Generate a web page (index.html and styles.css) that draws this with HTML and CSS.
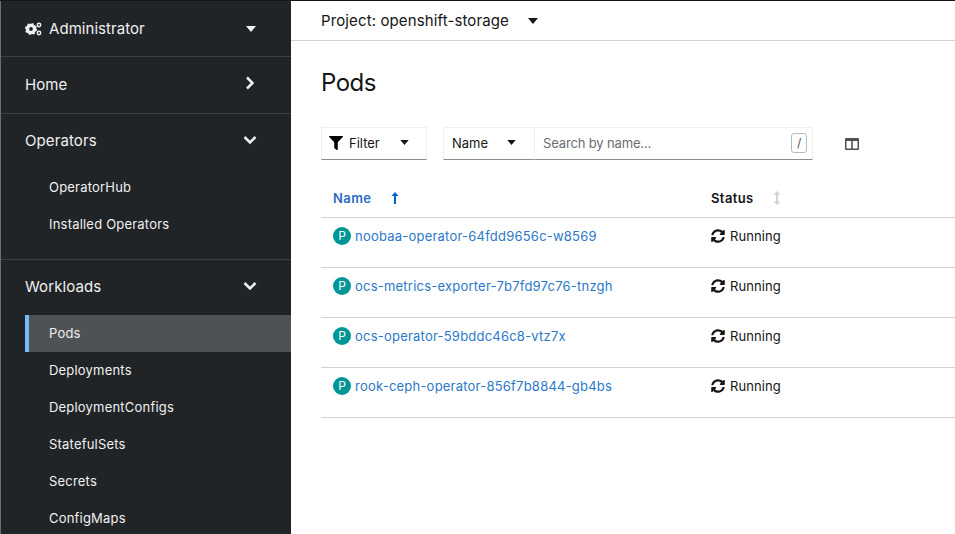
FILE: index.html
```html
<!DOCTYPE html>
<html lang="en">
<head>
    <meta charset="UTF-8">
    <title>Pods</title>
    <link rel="stylesheet" href="styles.css">
</head>
<body>
    <svg class="defs" width="0" height="0">
        <symbol id="sync" viewBox="0 0 512 512"><path d="M370.72 133.28C339.458 104.008 298.888 87.962 255.848 88c-77.458.068-144.328 53.178-162.791 126.85-1.344 5.363-6.122 9.15-11.651 9.15H24.103c-7.498 0-13.194-6.807-11.807-14.176C33.933 94.924 134.813 8 256 8c66.448 0 126.791 26.136 171.315 68.685L463.03 40.97C478.149 25.851 504 36.559 504 57.941V192c0 13.255-10.745 24-24 24H345.941c-21.382 0-32.09-25.851-16.971-40.971l41.75-41.749zM32 296h134.059c21.382 0 32.09 25.851 16.971 40.971l-41.75 41.75c31.262 29.273 71.835 45.319 114.876 45.28 77.418-.07 144.315-53.144 162.787-126.849 1.344-5.363 6.122-9.15 11.651-9.15h57.304c7.498 0 13.194 6.807 11.807 14.176C478.067 417.076 377.187 504 256 504c-66.448 0-126.791-26.136-171.315-68.685L48.97 471.03C33.851 486.149 8 475.441 8 454.059V320c0-13.255 10.745-24 24-24z"/></symbol>
    </svg>
    <nav class="sidebar">
        <div class="nav-section switcher">
            <svg class="cogs" viewBox="0 0 17 14" width="17" height="14">
                <circle class="cog-big" cx="6" cy="7" r="3.6"/>
                <circle class="cog-teeth" cx="6" cy="7" r="5.300"/>
                <circle class="cog-small" cx="14" cy="3" r="1.700"/>
                <circle class="cog-small" cx="14" cy="11" r="1.700"/>
            </svg>
            <span class="grow">Administrator</span>
            <svg class="caret-light" viewBox="0 0 10 6" width="10" height="6"><path d="M0 0h10L5 6z"/></svg>
        </div>
        <div class="nav-section">
            <div class="nav-head home">
                <span class="grow">Home</span>
                <svg class="chevron" viewBox="0 0 10 14" width="10" height="14"><path d="M2 1.500 7.500 7 2 12.500"/></svg>
            </div>
        </div>
        <div class="nav-section has-items">
            <div class="nav-head">
                <span class="grow">Operators</span>
                <svg class="chevron" viewBox="0 0 14 10" width="14" height="10"><path d="M1.500 2 7 7.500 12.500 2"/></svg>
            </div>
            <a class="nav-item">OperatorHub</a>
            <a class="nav-item">Installed Operators</a>
        </div>
        <div class="nav-section">
            <div class="nav-head">
                <span class="grow">Workloads</span>
                <svg class="chevron" viewBox="0 0 14 10" width="14" height="10"><path d="M1.500 2 7 7.500 12.500 2"/></svg>
            </div>
            <a class="nav-item current">Pods</a>
            <a class="nav-item">Deployments</a>
            <a class="nav-item">DeploymentConfigs</a>
            <a class="nav-item">StatefulSets</a>
            <a class="nav-item">Secrets</a>
            <a class="nav-item">ConfigMaps</a>
        </div>
    </nav>

    <main class="content">
        <div class="project-bar">
            <span>Project: openshift-storage</span>
            <svg class="caret" viewBox="0 0 10 6" width="10" height="6"><path d="M0 0h10L5 6z"/></svg>
        </div>
        <div class="page">
            <h1>Pods</h1>
            <div class="toolbar">
                <div class="select filter-select">
                    <svg viewBox="0 0 512 512" width="14" height="14"><path d="M487.976 0H24.028C2.71 0-8.047 25.866 7.058 40.971L192 225.941V432c0 7.831 3.821 15.17 10.237 19.662l80 55.98C298.02 518.69 320 507.493 320 487.98V225.941l184.947-184.97C520.021 25.896 509.338 0 487.976 0z"/></svg>
                    <span class="grow">Filter</span>
                    <svg class="caret" viewBox="0 0 10 6" width="9" height="5"><path d="M0 0h10L5 6z"/></svg>
                </div>
                <div class="search-group">
                    <div class="select name-select">
                        <span class="grow">Name</span>
                        <svg class="caret" viewBox="0 0 10 6" width="9" height="5"><path d="M0 0h10L5 6z"/></svg>
                    </div>
                    <div class="search">
                        <span class="grow">Search by name...</span>
                        <span class="slash">/</span>
                    </div>
                </div>
                <svg class="columns" viewBox="0 0 14 12" width="14" height="12"><path d="M1 0h12a1 1 0 0 1 1 1v10a1 1 0 0 1-1 1H1a1 1 0 0 1-1-1V1a1 1 0 0 1 1-1zm.5 3v7.500h4.700V3zm6.300 0v7.500h4.700V3z"/></svg>
            </div>

            <div class="table-head">
                <div class="col-name sorted">
                    Name
                    <svg viewBox="0 0 8 12" width="8" height="12"><path d="M4 0l3.600 4H5v8H3V4H.4z"/></svg>
                </div>
                <div class="col-status">
                    Status
                    <svg viewBox="0 0 8 14" width="8" height="14"><path d="M4 0l3.500 3.500H5v7h2.500L4 14 .5 10.500H3v-7H.5z"/></svg>
                </div>
            </div>

            <div class="row">
                <div class="col-name"><span class="badge">P</span><a>noobaa-operator-64fdd9656c-w8569</a></div>
                <div class="col-status"><svg class="sync" width="14" height="14"><use href="#sync"/></svg>Running</div>
            </div>
            <div class="row">
                <div class="col-name"><span class="badge">P</span><a>ocs-metrics-exporter-7b7fd97c76-tnzgh</a></div>
                <div class="col-status"><svg class="sync" width="14" height="14"><use href="#sync"/></svg>Running</div>
            </div>
            <div class="row">
                <div class="col-name"><span class="badge">P</span><a>ocs-operator-59bddc46c8-vtz7x</a></div>
                <div class="col-status"><svg class="sync" width="14" height="14"><use href="#sync"/></svg>Running</div>
            </div>
            <div class="row">
                <div class="col-name"><span class="badge">P</span><a>rook-ceph-operator-856f7b8844-gb4bs</a></div>
                <div class="col-status"><svg class="sync" width="14" height="14"><use href="#sync"/></svg>Running</div>
            </div>
        </div>
    </main>
</body>
</html>
```

FILE: styles.css
```css
*{
    box-sizing: border-box;
}

html, body{
    margin: 0;
    height: 100%;
    overflow: hidden;
}

body{
    display: flex;
    border-top: 1px solid #151515;
    background-color: white;
    color: #151515;
    font-family: Inter, "Noto Sans", sans-serif;
    font-size: 14px;
}

.defs{
    display: none;
}

.grow{
    flex: 1;
}

/* sidebar */
.sidebar{
    width: 291px;
    flex: none;
    background-color: #212427;
    color: #f0f0f0;
    border-left: 1px solid #6a6e73;
}

.nav-section{
    border-bottom: 1px solid #3c3f42;
}

.nav-section.has-items{
    padding-bottom: 16px;
}

.switcher{
    height: 56px;
    display: flex;
    align-items: center;
    padding: 0 35px 0 24px;
    font-size: 15px;
    letter-spacing: 0.05px;
}

.cogs{
    margin-right: 7px;
}

.cog-big{
    fill: none;
    stroke: #f0f0f0;
    stroke-width: 3.400;
}

.cog-teeth{
    fill: none;
    stroke: #f0f0f0;
    stroke-width: 1.500;
    stroke-dasharray: 2 2.160;
}

.cog-small{
    fill: none;
    stroke: #f0f0f0;
    stroke-width: 1.500;
}

.caret-light{
    fill: #f0f0f0;
}

.nav-head{
    height: 55px;
    display: flex;
    align-items: center;
    padding: 0 34px 2px 24px;
    font-size: 15px;
    letter-spacing: 0.1px;
}

.nav-head.home{
    height: 56px;
    padding-right: 36px;
}

.chevron{
    fill: none;
    stroke: #f0f0f0;
    stroke-width: 2.500;
    margin-bottom: 2px;
}

.nav-item{
    display: flex;
    align-items: center;
    height: 37px;
    margin-left: 24px;
    padding: 0 0 2px 24px;
    font-size: 13px;
    letter-spacing: 0.2px;
}

.nav-item.current{
    background-color: #4f5255;
    border-left: 4px solid #73bcf7;
    padding-left: 20px;
}

/* main area */
.content{
    flex: 1;
    min-width: 0;
}

.project-bar{
    height: 40px;
    display: flex;
    align-items: center;
    gap: 19px;
    padding-left: 30px;
    border-bottom: 1px solid #d2d2d2;
    font-size: 15px;
    letter-spacing: 0.12px;
}

.caret{
    fill: #151515;
    flex: none;
}

.page{
    padding-left: 30px;
}

h1{
    margin: 0;
    padding-top: 25px;
    height: 86px;
    font-size: 24px;
    line-height: 34px;
    font-weight: 400;
    letter-spacing: -0.5px;
}

.toolbar{
    display: flex;
    align-items: center;
    gap: 16px;
}

.select{
    height: 33px;
    display: flex;
    align-items: center;
    border: 1px solid #f0f0f0;
    border-bottom: 1px solid #8a8d90;
    padding: 0 17px 2px 7px;
    font-size: 13px;
}

.filter-select{
    width: 106px;
    gap: 6px;
}

.search-group{
    display: flex;
}

.name-select{
    width: 91px;
    border-right: none;
    padding: 0 18px 2px 8px;
}

.search{
    width: 279px;
    height: 33px;
    display: flex;
    align-items: center;
    border: 1px solid #f0f0f0;
    border-bottom: 1px solid #8a8d90;
    padding: 0 5px 2px 8px;
    color: #6a6e73;
    font-size: 13px;
    letter-spacing: -0.15px;
}

.slash{
    width: 16px;
    height: 20px;
    border: 1px solid #b8bbbe;
    border-radius: 3px;
    text-align: center;
    line-height: 18px;
    font-size: 12px;
    color: #4f5255;
}

.columns{
    margin-left: 16px;
    fill: #4f5255;
}

/* table */
.table-head, .row{
    display: flex;
    align-items: center;
    border-bottom: 1px solid #d2d2d2;
}

.table-head{
    height: 58px;
    font-size: 13px;
    font-weight: 600;
    padding-top: 19px;
    letter-spacing: 0.4px;
}

.row{
    height: 50px;
    align-items: flex-start;
    padding-top: 9px;
    font-size: 13px;
}

.col-name{
    width: 390px;
    padding-left: 12px;
    display: flex;
    align-items: center;
}

.col-status{
    display: flex;
    align-items: center;
}

.row .col-status{
    padding-top: 1px;
    letter-spacing: 0.1px;
}

.table-head .sorted{
    color: #2b6cc4;
}

.table-head .sorted svg{
    margin-left: 20px;
    fill: #06c;
}

.table-head .col-status svg{
    margin-left: 19px;
    fill: #d2d2d2;
}

.badge{
    width: 18px;
    height: 18px;
    margin-right: 4px;
    border-radius: 50%;
    background-color: #009596;
    color: white;
    text-align: center;
    line-height: 18px;
    font-size: 12px;
}

.row a{
    color: #2b78c9;
    letter-spacing: 0.22px;
}

.sync{
    margin-right: 5px;
    fill: #151515;
}
```
